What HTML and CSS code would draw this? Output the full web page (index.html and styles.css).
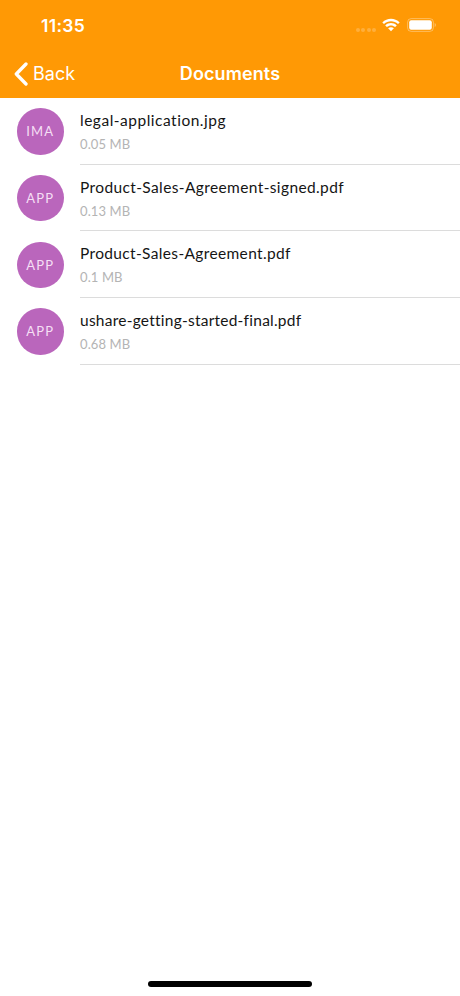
FILE: index.html
```html
<!DOCTYPE html>
<html lang="en">
<head>
  <meta charset="UTF-8">
  <meta name="viewport" content="width=device-width, initial-scale=1.0">
  <title>Documents</title>
  <link rel="stylesheet" href="styles.css">
</head>
<body>

<header>
  <div class="status">
    <span class="time">11:35</span>
    <div class="status-icons">
      <div class="signal"><i></i><i></i><i></i><i></i></div>
      <svg class="wifi" width="18" height="14" viewBox="0 0 18 14">
        <path d="M0.3 4.4C5.2-0.5 12.8-0.5 17.7 4.4L16 6.1C12.1 2.3 5.9 2.3 2 6.1Z"/>
        <path d="M3.2 7.4C6.5 4.2 11.5 4.2 14.8 7.4L13.1 9.1C10.7 6.9 7.3 6.9 4.9 9.1Z"/>
        <path d="M6.1 10.3C7.8 8.8 10.2 8.8 11.9 10.3L9 13.3Z"/>
      </svg>
      <svg class="battery" width="30" height="14" viewBox="0 0 30 14">
        <rect x="0.6" y="0.6" width="25.8" height="12.8" rx="3.6" fill="none" stroke="#fff" stroke-opacity="0.35"/>
        <rect x="2.2" y="2.2" width="22.6" height="9.6" rx="2"/>
        <path d="M27.7 5C29.3 5.6 29.3 8.4 27.7 9Z" fill-opacity="0.4"/>
      </svg>
    </div>
  </div>
  <nav>
    <a class="back">
      <svg width="14" height="24" viewBox="0 0 14 24">
        <path d="M12 2L2.3 12L12 22" fill="none" stroke="#fff" stroke-width="3.3" stroke-linecap="round" stroke-linejoin="round"/>
      </svg>
      <span>Back</span>
    </a>
    <h1>Documents</h1>
  </nav>
</header>

<ul class="documents">
  <li>
    <div class="avatar">IMA</div>
    <div class="details">
      <div class="name n1">legal-application.jpg</div>
      <div class="size">0.05 MB</div>
    </div>
  </li>
  <li>
    <div class="avatar">APP</div>
    <div class="details">
      <div class="name n2">Product-Sales-Agreement-signed.pdf</div>
      <div class="size">0.13 MB</div>
    </div>
  </li>
  <li>
    <div class="avatar">APP</div>
    <div class="details">
      <div class="name n3">Product-Sales-Agreement.pdf</div>
      <div class="size">0.1 MB</div>
    </div>
  </li>
  <li>
    <div class="avatar">APP</div>
    <div class="details">
      <div class="name n4">ushare-getting-started-final.pdf</div>
      <div class="size">0.68 MB</div>
    </div>
  </li>
</ul>

<div class="home-bar"></div>

</body>
</html>
```
FILE: styles.css
```css
* {
  box-sizing: border-box;
}
body {
  margin: 0;
  height: 996px;
  display: flex;
  flex-direction: column;
  background: #fff;
  font-family: Lato, sans-serif;
}
header {
  height: 98.2px;
  background: #ff9905;
  color: #fff;
  font-family: Inter, sans-serif;
}
.status {
  height: 50px;
  padding: 0 23px 0 41px;
  display: flex;
  align-items: center;
  justify-content: space-between;
}
.time {
  margin-top: 1px;
  font-size: 17.5px;
  font-weight: 600;
  letter-spacing: 0.3px;
}
.status-icons {
  display: flex;
  align-items: center;
}
.status svg {
  fill: #fff;
}
.signal {
  display: flex;
  gap: 1.5px;
  margin: 9px 6px 0 0;
}
.signal i {
  width: 4px;
  height: 4px;
  border-radius: 50%;
  background: rgba(255, 255, 255, 0.22);
}
.wifi {
  margin-right: 7px;
}
nav {
  height: 47px;
  display: grid;
  grid-template-columns: 1fr auto 1fr;
  align-items: center;
}
.back {
  display: flex;
  align-items: center;
  gap: 5px;
  padding-left: 14px;
  font-size: 18px;
}
h1 {
  margin: 0;
  font-size: 18px;
  font-weight: 600;
  letter-spacing: 0.1px;
}
.documents {
  list-style: none;
  margin: 0;
  padding: 0;
}
.documents li {
  height: 66.65px;
  display: flex;
  align-items: center;
  padding-left: 17px;
}
.avatar {
  width: 46.5px;
  height: 46.5px;
  margin-right: 16.5px;
  border-radius: 50%;
  background: #ba66bc;
  color: #f5dff5;
  font-size: 13px;
  letter-spacing: 1.2px;
  line-height: 46px;
  text-align: center;
}
.details {
  flex: 1;
  height: 100%;
  padding-top: 12px;
  border-bottom: 1px solid #dcdcdc;
}
.name {
  font-size: 15.5px;
  line-height: 20px;
  color: #151515;
}
/* tracking per file name */
.n1 {
  letter-spacing: 0.51px;
}
.n2 {
  letter-spacing: 0.38px;
}
.n3 {
  letter-spacing: 0.35px;
}
.n4 {
  letter-spacing: 0.24px;
}
.size {
  margin-top: 5px;
  font-size: 13px;
  line-height: 18px;
  letter-spacing: 0.1px;
  color: #b4b4b4;
}
.home-bar {
  width: 164px;
  height: 5.5px;
  margin: auto auto 9.5px;
  border-radius: 3px;
  background: #000;
}
```
